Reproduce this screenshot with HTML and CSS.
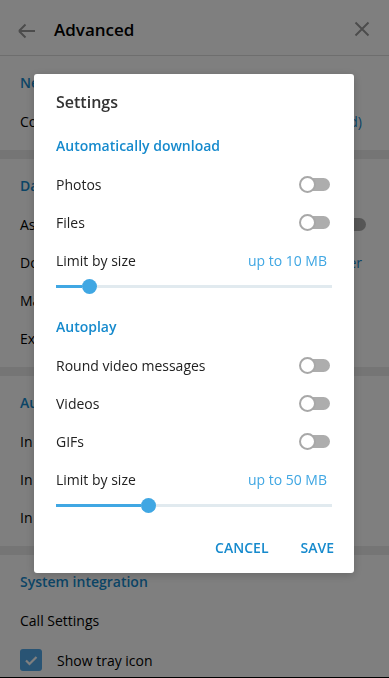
FILE: index.html
```html
<!DOCTYPE html>
<html lang="en">
<head>
  <meta charset="UTF-8">
  <meta name="viewport" content="width=device-width, initial-scale=1.0">
  <title>Advanced</title>
  <link rel="stylesheet" href="styles.css">
</head>
<body>
  <div class="window">
    <header class="topbar">
      <svg class="icon-back" width="20" height="20" viewBox="0 0 20 20">
        <path d="M3 11 H19 M3 11 L9.5 4.5 M3 11 L9.5 17.5" fill="none" stroke="#999" stroke-width="2"/>
      </svg>
      <h1 class="topbar-title">Advanced</h1>
      <svg class="icon-close" width="16" height="16" viewBox="0 0 16 16">
        <path d="M1.5 1.5 L14.5 14.5 M14.5 1.5 L1.5 14.5" fill="none" stroke="#999" stroke-width="2"/>
      </svg>
    </header>

    <section class="group">
      <div class="group-title">Network and proxy</div>
      <div class="row"><span>Connection type</span><span class="row-value">Default (TCP used)</span></div>
    </section>

    <section class="group">
      <div class="group-title">Data and storage</div>
      <div class="row"><span>Ask download path</span><span class="toggle"></span></div>
      <div class="row"><span>Download path</span><span class="row-value">Default folder</span></div>
      <div class="row"><span>Manage local storage</span></div>
      <div class="row"><span>Export Telegram data</span></div>
    </section>

    <section class="group">
      <div class="group-title">Automatic media download</div>
      <div class="row"><span>In private chats</span></div>
      <div class="row"><span>In groups</span></div>
      <div class="row"><span>In channels</span></div>
    </section>

    <section class="group">
      <div class="group-title">System integration</div>
      <div class="row"><span>Call Settings</span></div>
      <div class="row row-check">
        <span class="checkbox">
          <svg width="22" height="22" viewBox="0 0 22 22"><path d="M6 11.5 L9.5 15 L16.5 8" fill="none" stroke="#fff" stroke-width="2.2"/></svg>
        </span>
        <span>Show tray icon</span>
      </div>
    </section>
  </div>

  <div class="overlay">
    <div class="dialog">
      <div class="dialog-title">Settings</div>

      <div class="dialog-section">Automatically download</div>
      <div class="dialog-row"><span>Photos</span><span class="toggle"></span></div>
      <div class="dialog-row"><span>Files</span><span class="toggle"></span></div>
      <div class="dialog-row"><span>Limit by size</span><span class="limit-value">up to 10 MB</span></div>
      <div class="slider">
        <span class="slider-fill" style="width: 26px;"></span>
        <span class="slider-thumb"></span>
        <span class="slider-rest"></span>
      </div>

      <div class="dialog-section section-gap">Autoplay</div>
      <div class="dialog-row"><span>Round video messages</span><span class="toggle"></span></div>
      <div class="dialog-row"><span>Videos</span><span class="toggle"></span></div>
      <div class="dialog-row"><span>GIFs</span><span class="toggle"></span></div>
      <div class="dialog-row"><span>Limit by size</span><span class="limit-value">up to 50 MB</span></div>
      <div class="slider">
        <span class="slider-fill" style="width: 85px;"></span>
        <span class="slider-thumb"></span>
        <span class="slider-rest"></span>
      </div>

      <div class="dialog-buttons">
        <button class="text-button">CANCEL</button>
        <button class="text-button">SAVE</button>
      </div>
    </div>
  </div>
</body>
</html>
```

FILE: styles.css
```css
body {
  margin: 0;
  padding: 0;
  font-family: 'Open Sans', 'Noto Sans', sans-serif;
  font-size: 14px;
  color: #000;
  background-color: #fff;
}

.window {
  height: 678px;
  overflow: hidden;
  box-sizing: border-box;
  border-bottom: 1px solid #000;
  background-color: #ebebeb;
}

.topbar {
  height: 52px;
  display: flex;
  align-items: center;
  padding: 3px 19px 0 16px;
  background-color: #fff;
  border-bottom: 1px solid #dcdcdc;
}

.icon-back {
  margin-top: 1px;
}

.topbar-title {
  flex: 1;
  margin: 0 0 0 18px;
  font-size: 17px;
  font-weight: 600;
  color: #000;
}

.group {
  background-color: #fff;
  padding: 8px 0 10px;
  margin-bottom: 9px;
}

.group-title {
  height: 38px;
  line-height: 38px;
  padding: 0 20px;
  font-weight: 600;
  color: #168acd;
}

.row {
  height: 38px;
  display: flex;
  align-items: center;
  justify-content: space-between;
  padding: 0 27px 0 20px;
}

.row .toggle {
  margin-right: -4px;
}

.row-value {
  color: #168acd;
}

.row-check {
  justify-content: flex-start;
  gap: 15px;
  padding-top: 2px;
}

.checkbox {
  width: 22px;
  height: 22px;
  border-radius: 3px;
  background-color: #52a8e8;
  display: flex;
}

/* switch in the off state */
.toggle {
  position: relative;
  width: 31px;
  height: 17px;
}

.toggle::before {
  content: '';
  position: absolute;
  left: 3px;
  right: 0;
  top: 2px;
  height: 13px;
  border-radius: 7px;
  background-color: #adadad;
}

.toggle::after {
  content: '';
  position: absolute;
  left: 0;
  top: 0;
  width: 13px;
  height: 13px;
  border: 2px solid #a8a8a8;
  border-radius: 50%;
  background-color: #fff;
}

.overlay {
  position: fixed;
  top: 0;
  left: 0;
  right: 0;
  bottom: 0;
  background-color: rgba(0, 0, 0, 0.5);
  display: flex;
  justify-content: center;
  align-items: flex-start;
  padding-top: 74px;
}

.dialog {
  width: 320px;
  margin-right: 1px;
  padding: 17px 0 8px;
  border-radius: 3px;
  background-color: #fff;
  box-shadow: 0 2px 10px rgba(0, 0, 0, 0.2);
}

.dialog-title {
  padding: 0 22px;
  margin-bottom: 14px;
  font-size: 16px;
  line-height: 22px;
  font-weight: 600;
  color: #333;
}

.dialog-section {
  height: 38px;
  line-height: 38px;
  padding: 0 22px;
  font-weight: 600;
  color: #168acd;
}

.section-gap {
  margin-top: 14px;
}

.dialog-row {
  height: 38px;
  display: flex;
  align-items: center;
  justify-content: space-between;
  padding: 0 24px 0 22px;
  color: #222;
}

.limit-value {
  margin-right: 3px;
  color: #40a7e3;
}

.slider {
  height: 15px;
  display: flex;
  align-items: center;
  padding: 0 22px;
}

.slider-fill {
  height: 3px;
  background-color: #40a7e3;
}

.slider-thumb {
  width: 15px;
  height: 15px;
  border-radius: 50%;
  background-color: #40a7e3;
}

.slider-rest {
  flex: 1;
  height: 3px;
  background-color: #e1eaef;
}

.dialog-buttons {
  display: flex;
  justify-content: flex-end;
  gap: 12px;
  margin-top: 16px;
  padding-right: 10px;
}

.text-button {
  height: 36px;
  padding: 0 10px;
  border: none;
  background: none;
  font-family: 'Open Sans', 'Noto Sans', sans-serif;
  font-size: 14px;
  font-weight: 600;
  color: #168acd;
  cursor: pointer;
}
```
